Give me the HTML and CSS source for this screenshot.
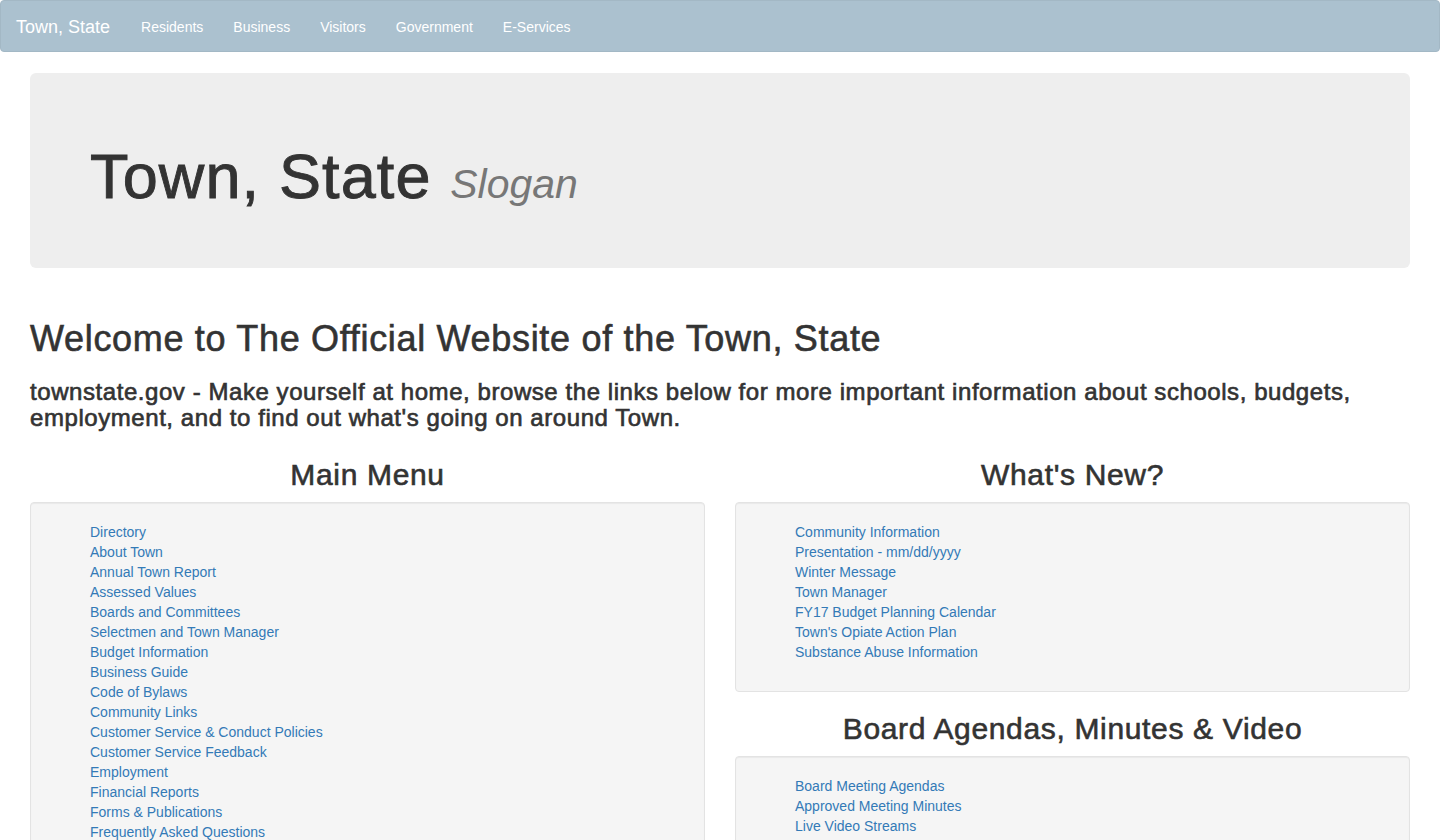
FILE: index.html
```html
<!DOCTYPE html>
<html lang="en">
<head>
<meta charset="utf-8">
<title>Town, State</title>
<link rel="stylesheet" href="styles.css">
</head>
<body>
<nav class="navbar">
  <a class="brand" href="#">Town, State</a>
  <ul class="nav">
    <li><a href="#">Residents</a></li>
    <li><a href="#">Business</a></li>
    <li><a href="#">Visitors</a></li>
    <li><a href="#">Government</a></li>
    <li><a href="#">E-Services</a></li>
  </ul>
</nav>
<main class="page">
  <div class="jumbotron">
    <h1 class="jumbo-title">Town, State <small class="slogan">Slogan</small></h1>
  </div>
  <h1 class="welcome">Welcome to The Official Website of the Town, State</h1>
  <h3 class="intro">townstate.gov - Make yourself at home, browse the links below for more important information about schools, budgets, employment, and to find out what's going on around Town.</h3>
  <div class="columns">
    <section class="col">
      <h2 class="col-title">Main Menu</h2>
      <div class="well">
        <ul class="links">
          <li><a href="#">Directory</a></li>
          <li><a href="#">About Town</a></li>
          <li><a href="#">Annual Town Report</a></li>
          <li><a href="#">Assessed Values</a></li>
          <li><a href="#">Boards and Committees</a></li>
          <li><a href="#">Selectmen and Town Manager</a></li>
          <li><a href="#">Budget Information</a></li>
          <li><a href="#">Business Guide</a></li>
          <li><a href="#">Code of Bylaws</a></li>
          <li><a href="#">Community Links</a></li>
          <li><a href="#">Customer Service &amp; Conduct Policies</a></li>
          <li><a href="#">Customer Service Feedback</a></li>
          <li><a href="#">Employment</a></li>
          <li><a href="#">Financial Reports</a></li>
          <li><a href="#">Forms &amp; Publications</a></li>
          <li><a href="#">Frequently Asked Questions</a></li>
          <li><a href="#">Maps</a></li>
          <li><a href="#">Public Safety</a></li>
          <li><a href="#">Schools</a></li>
        </ul>
      </div>
    </section>
    <section class="col">
      <h2 class="col-title">What's New?</h2>
      <div class="well">
        <ul class="links">
          <li><a href="#">Community Information</a></li>
          <li><a href="#">Presentation - mm/dd/yyyy</a></li>
          <li><a href="#">Winter Message</a></li>
          <li><a href="#">Town Manager</a></li>
          <li><a href="#">FY17 Budget Planning Calendar</a></li>
          <li><a href="#">Town's Opiate Action Plan</a></li>
          <li><a href="#">Substance Abuse Information</a></li>
        </ul>
      </div>
      <h2 class="col-title">Board Agendas, Minutes &amp; Video</h2>
      <div class="well">
        <ul class="links">
          <li><a href="#">Board Meeting Agendas</a></li>
          <li><a href="#">Approved Meeting Minutes</a></li>
          <li><a href="#">Live Video Streams</a></li>
          <li><a href="#">Video Archive</a></li>
        </ul>
      </div>
    </section>
  </div>
</main>
</body>
</html>
```
FILE: styles.css
```css
* { box-sizing: border-box; }
html, body { margin: 0; padding: 0; }
body {
  font-family: "Liberation Sans", Arial, sans-serif;
  font-size: 14px;
  line-height: 1.42857;
  color: #333;
  background: #fff;
}
a { color: #337ab7; text-decoration: none; }

.navbar {
  display: flex;
  align-items: center;
  height: 52px;
  background: #abc1cf;
  border: 1px solid #a3b8c5;
  border-radius: 4px;
  padding: 0;
  margin-bottom: 21px;
}
.brand {
  color: #fff;
  font-size: 18px;
  line-height: 20px;
  padding: 16px 16px 14px 15px;
}
.nav {
  display: flex;
  list-style: none;
  margin: 0;
  padding: 0;
}
.nav a {
  display: block;
  color: #fff;
  font-size: 14px;
  line-height: 20px;
  padding: 16px 15px 14px;
}

.page { padding: 0 30px; }

.jumbotron {
  background: #eee;
  border-radius: 6px;
  padding: 48px 60px;
  margin-bottom: 51px;
}
.jumbo-title {
  margin: 21px 0 9px;
  font-size: 63px;
  line-height: 1.1;
  font-weight: 400;
  letter-spacing: 0.018em;
  -webkit-text-stroke: 0.9px #333;
  color: #333;
}
.slogan {
  font-size: 65%;
  color: #777;
  font-style: italic;
  font-weight: normal;
  line-height: 1;
  letter-spacing: 0;
  -webkit-text-stroke: 0;
}

.welcome, .intro, .col-title {
  font-weight: 400;
  letter-spacing: 0.022em;
}
.welcome {
  font-size: 36px;
  line-height: 1.1;
  margin: 0 0 10px;
  letter-spacing: 0.019em;
  -webkit-text-stroke: 0.6px #333;
}
.intro {
  font-size: 24px;
  line-height: 1.1;
  margin: 20px 0 10px;
  letter-spacing: 0.0235em;
  -webkit-text-stroke: 0.65px #333;
}

.columns {
  display: grid;
  grid-template-columns: 1fr 1fr;
  column-gap: 30px;
}
.col-title {
  font-size: 30px;
  line-height: 1.1;
  text-align: center;
  margin: 16px 0 11px;
  -webkit-text-stroke: 0.6px #333;
}
.well {
  background: #f5f5f5;
  border: 1px solid #e3e3e3;
  border-radius: 4px;
  padding: 19px;
  margin-bottom: 20px;
  box-shadow: inset 0 1px 1px rgba(0,0,0,.05);
}
.links {
  margin: 0 0 10px;
  padding-left: 40px;
  list-style: none;
}
.links li { line-height: 20px; }
```
